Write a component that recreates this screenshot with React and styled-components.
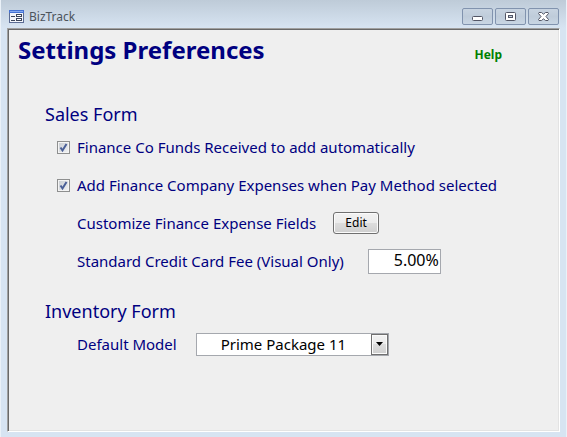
import { useState } from "react";
import styled, { createGlobalStyle } from "styled-components";

const GlobalStyle = createGlobalStyle`
  * {
    box-sizing: border-box;
  }
  body {
    margin: 0;
    font-family: "Noto Sans", Tahoma, sans-serif;
    color: #000080;
  }
  button, input, select {
    font-family: inherit;
  }
`;

const Window = styled.div`
  display: flex;
  flex-direction: column;
  min-height: 100vh;
  padding: 0 6px 5px;
  border: solid #eaf1f8;
  border-width: 0 1px;
  background: #d7e4f2 linear-gradient(#becbd8, #d7e4f2) no-repeat top / 100% 28px;
`;

const TitleBar = styled.header`
  display: flex;
  align-items: center;
  height: 28px;
  padding: 4px 1px 0 2px;
`;

const WindowTitle = styled.span`
  flex: 1;
  margin-left: 5px;
  font-size: 12px;
  color: #4c545c;
`;

const WindowButtons = styled.div`
  display: flex;
  gap: 2px;
`;

const WindowButton = styled.button`
  display: flex;
  align-items: center;
  justify-content: center;
  width: 31px;
  height: 17px;
  padding: 0;
  border: 1px solid #8193ae;
  border-radius: 2px;
  background: linear-gradient(#c8d4e1, #bfccda 50%, #c9d6e4);
`;

const Panel = styled.main`
  flex: 1;
  padding: 1px;
  border: 1px solid;
  border-color: #a0a0a0 #fff #fff #a0a0a0;
  box-shadow: inset 1px 1px #696969, inset -1px -1px #e3e3e3;
  background: #efefef;
`;

const Heading = styled.div`
  display: flex;
  align-items: center;
  justify-content: space-between;
  height: 40px;
  padding: 0 56px 0 9px;
`;

const Title = styled.h1`
  margin: 0;
  font-size: 24px;
  line-height: 40px;
`;

const HelpLink = styled.a`
  padding-top: 9px;
  font-size: 12px;
  font-weight: bold;
  color: #008000;
  text-decoration: none;
`;

const Form = styled.form`
  display: flex;
  flex-direction: column;
  gap: 17px;
  padding: 30px 36px 0;
`;

const SectionTitle = styled.h2`
  margin: 0;
  font-size: 18px;
  font-weight: normal;
  line-height: 28px;
`;

const Row = styled.div`
  display: flex;
  align-items: center;
  gap: ${(props) => props.$gap || 17}px;
  height: 38px;
  padding-left: ${(props) => (props.$check ? 12 : 32)}px;
  font-size: 15px;
  white-space: nowrap;
`;

const CheckLabel = styled.label`
  display: flex;
  align-items: center;
  gap: 7px;
`;

const CheckWrap = styled.span`
  position: relative;
  width: 13px;
  height: 13px;
`;

const CheckInput = styled.input`
  display: block;
  appearance: none;
  width: 13px;
  height: 13px;
  margin: 0;
  border: 1px solid #8e8f8f;
  background: linear-gradient(135deg, #c5cad0, #f4f5f6);
  box-shadow: inset 0 0 0 1px #f4f4f4;

  &:not(:checked) + svg {
    display: none;
  }
`;

const Overlay = styled.svg`
  position: absolute;
  top: 0;
  left: 0;
  pointer-events: none;
`;

const EditButton = styled.button`
  width: 46px;
  height: 22px;
  padding: 0;
  border: 1px solid #707070;
  border-radius: 3px;
  background: linear-gradient(#f2f2f2, #ebebeb 50%, #dddddd 50%, #cfcfcf);
  box-shadow: inset 0 0 0 1px #fbfbfb;
  font-size: 12px;
  line-height: 18px;
  color: #000;
`;

const FeeInput = styled.input`
  width: 73px;
  height: 25px;
  padding: 0 1px 2px;
  border: 1px solid #a5a8ae;
  background: #fff;
  font-size: 16px;
  text-align: right;
  color: #000;
`;

const SelectWrap = styled.span`
  position: relative;
`;

const ModelSelect = styled.select`
  display: block;
  appearance: none;
  width: 193px;
  height: 23px;
  padding: 0 18px 0 24px;
  border: 1px solid #a5a8ae;
  border-radius: 0;
  background: #fff;
  font-size: 15px;
  color: #000;
`;

const SelectArrow = styled.span`
  position: absolute;
  top: 1px;
  right: 1px;
  display: flex;
  align-items: center;
  justify-content: center;
  width: 17px;
  height: 21px;
  border: 1px solid #707070;
  background: linear-gradient(#f2f2f2, #ebebeb 50%, #dddddd 50%, #cfcfcf);
  box-shadow: inset 0 0 0 1px #fbfbfb;
  pointer-events: none;
`;

const FormIcon = () => (
  <svg width="15" height="13" viewBox="0 0 15 13" shapeRendering="crispEdges">
    <rect width="15" height="13" fill="#5b6c94" />
    <rect width="15" height="3" fill="#4472d4" />
    <rect x="1" y="1" width="13" height="1" fill="#86aaf0" />
    <rect x="1" y="3" width="13" height="9" fill="#f3f6fb" />
    <path d="M2 6h4v1H2zM2 10h4v1H2z" fill="#3c465c" />
    <path d="M7 4h6v3H7zM7 8h6v3H7z" fill="#3c465c" />
    <path d="M8 5h4v1H8zM8 9h4v1H8z" fill="#fff" />
  </svg>
);

const MinimizeIcon = () => (
  <svg width="11" height="11" viewBox="0 0 11 11">
    <rect x=".5" y="5.500" width="10" height="4" rx="1" fill="#fff" stroke="#535666" />
  </svg>
);

const MaximizeIcon = () => (
  <svg width="11" height="9" viewBox="0 0 11 9">
    <rect x=".5" y=".5" width="10" height="8" rx="1" fill="#fff" stroke="#535666" />
    <rect x="3.500" y="3.500" width="4" height="2" fill="#c5d1de" stroke="#535666" />
  </svg>
);

const CloseIcon = () => (
  <svg width="11" height="9" viewBox="0 0 11 9">
    <path
      d="M1 .5h2.500l2 1.700 2-1.700H10l.5 1L8 4.500l2.500 3-.5 1H7.500l-2-1.700-2 1.700H1l-.5-1L3 4.500.5 1.500z"
      fill="#fff"
      stroke="#535666"
      strokeLinejoin="round"
    />
  </svg>
);

const Check = ({ label, name }) => (
  <Row $check>
    <CheckLabel>
      <CheckWrap>
        <CheckInput type="checkbox" name={name} defaultChecked />
        <Overlay width="13" height="13" viewBox="0 0 13 13">
          <path d="M3.500 6.500 5.500 9.500 9.500 3" fill="none" stroke="#4a5f97" strokeWidth="2" />
        </Overlay>
      </CheckWrap>
      {label}
    </CheckLabel>
  </Row>
);

export default () => {
  const [fee, setFee] = useState("5.00%");
  return (
    <>
      <GlobalStyle />
      <Window>
        <TitleBar>
          <FormIcon />
          <WindowTitle>BizTrack</WindowTitle>
          <WindowButtons>
            <WindowButton aria-label="Minimize">
              <MinimizeIcon />
            </WindowButton>
            <WindowButton aria-label="Maximize">
              <MaximizeIcon />
            </WindowButton>
            <WindowButton aria-label="Close">
              <CloseIcon />
            </WindowButton>
          </WindowButtons>
        </TitleBar>
        <Panel>
          <Heading>
            <Title>Settings Preferences</Title>
            <HelpLink href="#help">Help</HelpLink>
          </Heading>
          <Form>
            <section>
              <SectionTitle>Sales Form</SectionTitle>
              <Check name="funds" label="Finance Co Funds Received to add automatically" />
              <Check name="expenses" label="Add Finance Company Expenses when Pay Method selected" />
              <Row>
                <span id="fields">Customize Finance Expense Fields</span>
                <EditButton type="button" aria-describedby="fields">
                  Edit
                </EditButton>
              </Row>
              <Row $gap={24}>
                <label htmlFor="fee">Standard Credit Card Fee (Visual Only)</label>
                <FeeInput id="fee" value={fee} onChange={(e) => setFee(e.target.value)} />
              </Row>
            </section>
            <section>
              <SectionTitle>Inventory Form</SectionTitle>
              <Row $gap={19}>
                <label htmlFor="model">Default Model</label>
                <SelectWrap>
                  <ModelSelect id="model">
                    <option>Prime Package 11</option>
                  </ModelSelect>
                  <SelectArrow>
                    <svg width="7" height="4" viewBox="0 0 7 4">
                      <path d="M0 0h7L3.500 4z" fill="#000" />
                    </svg>
                  </SelectArrow>
                </SelectWrap>
              </Row>
            </section>
          </Form>
        </Panel>
      </Window>
    </>
  );
};
